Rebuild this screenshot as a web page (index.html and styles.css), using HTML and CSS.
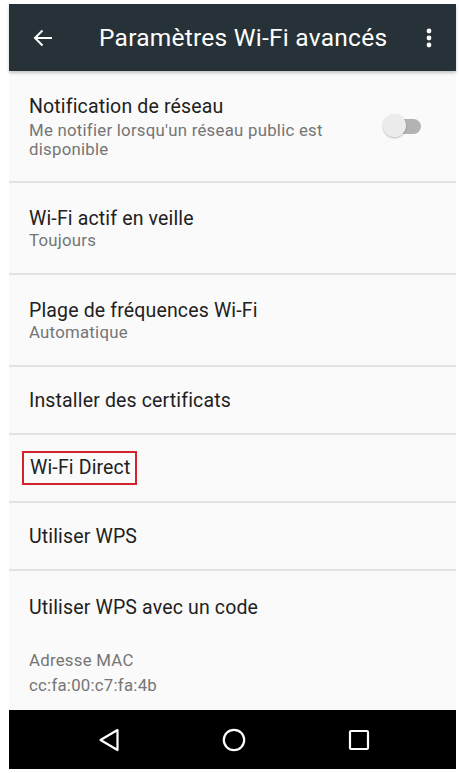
FILE: index.html
```html
<!DOCTYPE html>
<html lang="fr">
<head>
<meta charset="utf-8">
<title>Paramètres Wi-Fi avancés</title>
<link rel="stylesheet" href="styles.css">
</head>
<body>
<div class="screen">
  <header class="appbar">
    <svg class="appbar-back" width="20" height="18" viewBox="0 0 20 18"><path d="M19 9H2M9.5 1.5L2 9l7.5 7.5" fill="none" stroke="#fff" stroke-width="2"/></svg>
    <h1 class="appbar-title">Paramètres Wi-Fi avancés</h1>
    <svg class="appbar-menu" width="6" height="20" viewBox="0 0 6 20"><circle cx="3" cy="3" r="2.4" fill="#fff"/><circle cx="3" cy="10" r="2.4" fill="#fff"/><circle cx="3" cy="17" r="2.4" fill="#fff"/></svg>
  </header>
  <main class="list">
    <div class="row row-tall">
      <div class="row-text">
        <div class="primary">Notification de réseau</div>
        <div class="secondary">Me notifier lorsqu'un réseau public est disponible</div>
      </div>
      <div class="switch"><span class="switch-track"></span><span class="switch-thumb"></span></div>
    </div>
    <div class="row row-two">
      <div class="row-text">
        <div class="primary">Wi-Fi actif en veille</div>
        <div class="secondary">Toujours</div>
      </div>
    </div>
    <div class="row row-two">
      <div class="row-text">
        <div class="primary">Plage de fréquences Wi-Fi</div>
        <div class="secondary">Automatique</div>
      </div>
    </div>
    <div class="row row-one">
      <div class="primary">Installer des certificats</div>
    </div>
    <div class="row row-one">
      <div class="primary highlight">Wi-Fi Direct</div>
    </div>
    <div class="row row-one">
      <div class="primary">Utiliser WPS</div>
    </div>
    <div class="row-last">
      <div class="primary">Utiliser WPS avec un code</div>
      <div class="mac">
        <div class="secondary">Adresse MAC</div>
        <div class="secondary">cc:fa:00:c7:fa:4b</div>
      </div>
    </div>
  </main>
  <nav class="navbar">
    <svg width="22" height="24" viewBox="0 0 22 24"><path d="M19.5 2L2.5 12l17 10z" fill="none" stroke="#fff" stroke-width="2.2" stroke-linejoin="round"/></svg>
    <svg width="24" height="24" viewBox="0 0 24 24"><circle cx="12" cy="12" r="10.2" fill="none" stroke="#fff" stroke-width="2.2"/></svg>
    <svg width="22" height="22" viewBox="0 0 22 22"><rect x="2" y="2" width="18" height="18" rx="1" fill="none" stroke="#fff" stroke-width="2.2"/></svg>
  </nav>
</div>
</body>
</html>
```

FILE: styles.css
```css
* { box-sizing: border-box; }
html, body { margin: 0; padding: 0; background: #ffffff; }
body { font-family: Roboto, "Noto Sans", sans-serif; }

.screen {
  width: 447px;
  height: 765px;
  margin: 4px 0 0 9px;
  display: flex;
  flex-direction: column;
  background: #fafafa;
}

.appbar {
  height: 67px;
  flex: none;
  background: #263238;
  display: flex;
  align-items: center;
  padding: 0 24px 0 24px;
  box-shadow: 0 2px 3px rgba(0,0,0,0.22);
  position: relative;
  z-index: 1;
}
.appbar-back { flex: none; }
.appbar-title {
  margin: 0 0 0 46px;
  flex: 1;
  font-weight: 400;
  font-size: 24.5px;
  letter-spacing: 0.25px;
  color: #ffffff;
  white-space: nowrap;
}
.appbar-menu { flex: none; }

.list {
  flex: 1;
  display: flex;
  flex-direction: column;
}

.row {
  display: flex;
  align-items: center;
  padding: 0 20px;
  border-bottom: 2px solid #e3e3e3;
}
.row-tall { height: 112px; }
.row-two { height: 92px; }
.row-one { height: 68px; }

.row-text { flex: 1; display: flex; flex-direction: column; }

.primary {
  font-size: 19.5px;
  line-height: 25px;
  letter-spacing: 0.15px;
  color: #212121;
}
.secondary {
  font-size: 16.8px;
  line-height: 19px;
  letter-spacing: 0.25px;
  color: #757575;
}
.row-tall .secondary { max-width: 340px; margin-top: 2px; }
.row-two .secondary { margin-top: 0; }

.highlight {
  margin-left: -7px;
  padding: 2px 5px 3px 6px;
  border: 2px solid #d2232f;
}

.switch {
  position: relative;
  width: 40px;
  height: 26px;
  flex: none;
  margin-right: 13px;
}
.switch-track {
  position: absolute;
  left: 8px;
  top: 6px;
  width: 30px;
  height: 15px;
  border-radius: 8px;
  background: #b3b3b3;
}
.switch-thumb {
  position: absolute;
  left: 0;
  top: 1px;
  width: 23px;
  height: 23px;
  border-radius: 50%;
  background: #ececec;
  box-shadow: 0 1px 2px rgba(0,0,0,0.25);
}

.row-last {
  flex: 1;
  padding: 24px 20px 0 20px;
  display: flex;
  flex-direction: column;
}
.mac { margin-top: 28px; }
.mac .secondary { line-height: 25px; }

.navbar {
  height: 59px;
  flex: none;
  background: #000000;
  display: flex;
  align-items: center;
  justify-content: center;
  gap: 102px;
  padding-left: 2px;
}
```
